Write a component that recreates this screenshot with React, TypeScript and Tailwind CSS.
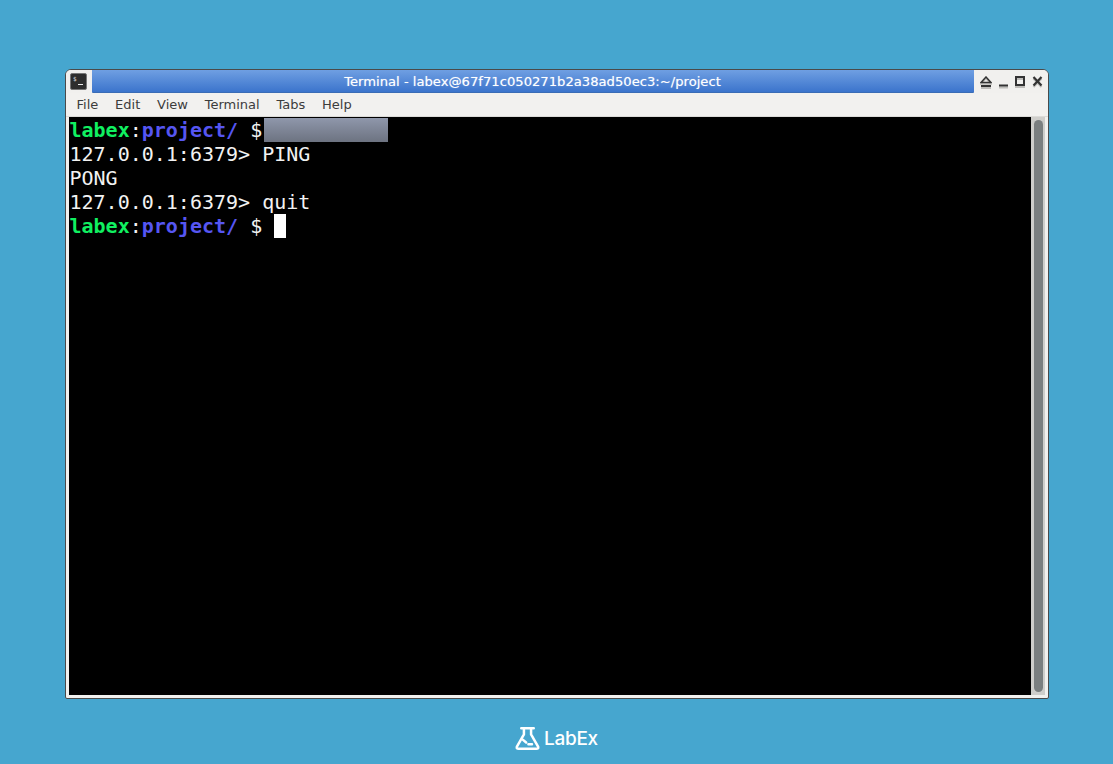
export default function App() {
  const Prompt = () => (
    <>
      <span className="font-bold text-[#10f060]">labex</span>
      <span>:</span>
      <span className="font-bold text-[#5656f2]">project/</span>
      <span> $ </span>
    </>
  );
  return (
    <div className="w-[1113px] h-[764px] bg-[#46a6cf] flex flex-col items-center overflow-hidden">
      <div className="mt-[69px] w-[984px] h-[630px] bg-[#f2f1ef] border border-[#4a4a4a] rounded-t-[6px] rounded-b-[2px] flex flex-col overflow-hidden">
        <div className="h-[23px] shrink-0 flex bg-[#f1f0ee]">
          <div className="w-[26px] flex items-center justify-center">
            <svg width="17" height="17" viewBox="0 0 17 17">
              <rect x="0.5" y="0.5" width="16" height="16" rx="1.5" fill="#2e2e2e" stroke="#777" />
              <text x="3" y="8" fontSize="6" fill="#ddd" fontFamily="DejaVu Sans Mono">$</text>
              <rect x="8" y="11" width="5" height="1" fill="#eee" />
            </svg>
          </div>
          <div className="flex-1 bg-gradient-to-b from-[#6f9fe2] to-[#3b74cc] flex items-center justify-center border-b border-[#3a6cb5] rounded-b-[1px]">
            <span className="text-white text-[13.15px] font-['DejaVu_Sans',sans-serif] font-medium pt-[2px] [text-shadow:0_0_1px_#ffffff80]">
              Terminal - labex@67f71c050271b2a38ad50ec3:~/project
            </span>
          </div>
          <div className="w-[74px] flex items-start pt-[6px] pl-[6px] gap-[6px]">
            <svg width="12" height="14" viewBox="0 0 12 14">
              <path d="M6 2.5 L11 8 H1 Z" fill="none" stroke="#bdbcb9" strokeWidth="1.5" />
              <rect x="1" y="11" width="10" height="2" fill="#bdbcb9" />
              <path d="M6 1 L11 6.5 H1 Z" fill="none" stroke="#333" strokeWidth="1.5" />
              <rect x="1" y="9" width="10" height="2" fill="#333" />
            </svg>
            <svg className="ml-[1px]" width="10" height="14" viewBox="0 0 10 14">
              <rect x="0" y="10.5" width="9" height="2" fill="#bdbcb9" />
              <rect x="0" y="8.5" width="9" height="2" fill="#333" />
            </svg>
            <svg width="10" height="14" viewBox="0 0 10 14">
              <rect x="1" y="3" width="8" height="8" fill="none" stroke="#bdbcb9" strokeWidth="2" />
              <rect x="1" y="1" width="8" height="8" fill="none" stroke="#333" strokeWidth="2" />
            </svg>
            <svg className="ml-[1px]" width="11" height="14" viewBox="0 0 11 14">
              <path d="M1.5 2.5 L9.5 11 M9.5 2.5 L1.5 11" fill="none" stroke="#bdbcb9" strokeWidth="2.2" />
              <path d="M1.5 1 L9.5 9.5 M9.5 1 L1.5 9.5" fill="none" stroke="#333" strokeWidth="2.2" />
            </svg>
          </div>
        </div>
        <div className="h-[24px] shrink-0 flex items-center gap-[16.8px] pl-[11px] text-[13px] text-[#3c3c3c] font-['DejaVu_Sans',sans-serif] border-b border-[#dcdbd8]">
          <span>File</span>
          <span>Edit</span>
          <span>View</span>
          <span>Terminal</span>
          <span>Tabs</span>
          <span>Help</span>
        </div>
        <div className="flex-1 flex pl-[3px] pr-[3px] pb-[3px] min-h-0">
          <div className="flex-1 bg-black pl-[1px] pt-[1px] text-[20px] leading-[24px] text-[#f2f2f2] font-['DejaVu_Sans_Mono',monospace] whitespace-pre">
            <div className="relative">
              <Prompt />
              <span className="absolute left-[194px] top-0 w-[124px] h-[24px] bg-gradient-to-b from-[#8f97ab] to-[#6d7381]" />
            </div>
            <div>127.0.0.1:6379&gt; PING</div>
            <div>PONG</div>
            <div>127.0.0.1:6379&gt; quit</div>
            <div className="flex">
              <span><Prompt /></span>
              <span className="w-[12px] h-[24px] bg-white" />
            </div>
          </div>
          <div className="w-[14px] bg-[#cfcecb] flex justify-end pr-[2px] pt-[3px] pb-[3px]">
            <div className="w-[9px] h-full rounded-full bg-[#7b7f80]" />
          </div>
        </div>
      </div>
      <div className="mt-[27px] flex items-center gap-[4px]">
        <svg width="25" height="25" viewBox="0 0 28 27" fill="none" stroke="white" strokeWidth="2.8" strokeLinejoin="round" strokeLinecap="round">
          <path d="M7 2 H21 M10 2 V9 L2 23 Q1.5 25 4 25 H24 Q26.5 25 26 23 L18 9 V2" />
          <path d="M9 15 L12.5 18 M15 20 H19" />
        </svg>
        <span className="text-white text-[19px] font-['Inter',sans-serif] font-medium leading-none tracking-[-0.3px]">LabEx</span>
      </div>
    </div>
  );
}
